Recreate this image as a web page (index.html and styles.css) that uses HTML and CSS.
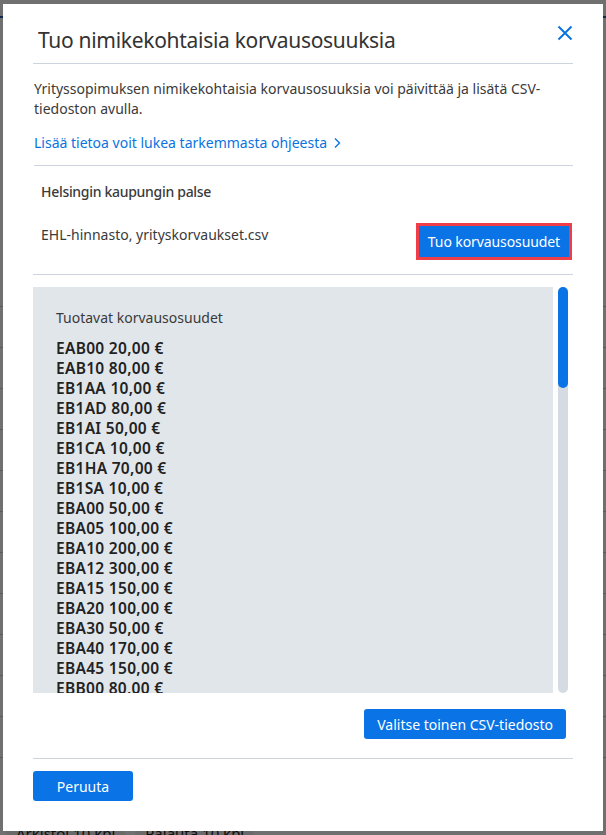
FILE: index.html
```html
<!DOCTYPE html>
<html lang="fi">
  <head>
    <meta charset="UTF-8" />
    <title>Tuo nimikekohtaisia korvausosuuksia</title>
    <link rel="stylesheet" href="styles.css">
  </head>
  <body>
    <!-- page behind the dialog -->
    <div class="page">
      <div class="topbar"></div>
      <div class="rows">
        <div class="row"></div>
        <div class="row"></div>
        <div class="row"></div>
        <div class="row"></div>
        <div class="row"></div>
        <div class="row"></div>
        <div class="row"></div>
        <div class="row"></div>
        <div class="row"></div>
        <div class="row"></div>
        <div class="row"></div>
        <div class="row"></div>
      </div>
      <div class="page-actions">
        <span class="page-btn">Arkistoi 10 kpl</span>
        <span class="page-btn">Palauta 10 kpl</span>
      </div>
    </div>
    <div class="backdrop"></div>

    <div class="modal">
      <div class="modal-header">
        <h2 class="modal-title">Tuo nimikekohtaisia korvausosuuksia</h2>
        <button class="close" aria-label="Sulje">
          <svg width="16" height="16" viewBox="0 0 16 16">
            <path d="M1.5 1.5 L14.5 14.5 M14.5 1.5 L1.5 14.5" stroke="#0a73e0" stroke-width="2" fill="none" />
          </svg>
        </button>
      </div>

      <div class="modal-body">
        <p class="intro">
          Yrityssopimuksen nimikekohtaisia korvausosuuksia voi päivittää ja lisätä CSV-tiedoston avulla.
        </p>
        <a class="help-link" href="#">Lisää tietoa voit lukea tarkemmasta ohjeesta
          <svg width="8" height="12" viewBox="0 0 8 12">
            <path d="M2 1.5 L6.5 6 L2 10.5" stroke="#0a73e0" stroke-width="1.4" fill="none" />
          </svg>
        </a>

        <div class="import-section">
          <div class="company">Helsingin kaupungin palse</div>
          <div class="file-row">
            <span class="file-name">EHL-hinnasto, yrityskorvaukset.csv</span>
            <button class="btn btn-focus">Tuo korvausosuudet</button>
          </div>
        </div>

        <div class="preview">
          <div class="preview-list">
            <div class="preview-title">Tuotavat korvausosuudet</div>
            <ul id="items"></ul>
          </div>
          <div class="scrollbar"><div class="thumb"></div></div>
        </div>

        <div class="choose-row">
          <button class="btn">Valitse toinen CSV-tiedosto</button>
        </div>
      </div>

      <div class="modal-footer">
        <button class="btn btn-wide">Peruuta</button>
      </div>
    </div>

    <script>
      const rates = [
        ["EAB00", "20,00"], ["EAB10", "80,00"], ["EB1AA", "10,00"],
        ["EB1AD", "80,00"], ["EB1AI", "50,00"], ["EB1CA", "10,00"],
        ["EB1HA", "70,00"], ["EB1SA", "10,00"], ["EBA00", "50,00"],
        ["EBA05", "100,00"], ["EBA10", "200,00"], ["EBA12", "300,00"],
        ["EBA15", "150,00"], ["EBA20", "100,00"], ["EBA30", "50,00"],
        ["EBA40", "170,00"], ["EBA45", "150,00"], ["EBB00", "80,00"],
        ["EBB10", "60,00"], ["EBB20", "40,00"]
      ];
      const list = document.getElementById("items");
      rates.forEach(([code, price]) => {
        const li = document.createElement("li");
        li.textContent = `${code} ${price} €`;
        list.appendChild(li);
      });
    </script>
  </body>
</html>
```

FILE: styles.css
```css
* {
  box-sizing: border-box;
}

body {
  margin: 0;
  font-family: "Noto Sans", "Open Sans", sans-serif;
  color: #333;
  background: #fff;
  width: 606px;
  height: 835px;
  overflow: hidden;
}

/* background page */
.page {
  height: 835px;
  display: flex;
  flex-direction: column;
}

.topbar {
  height: 18px;
  border-bottom: 2px solid #1c5fb0;
}

.rows {
  margin-top: 248px;
}

.row {
  height: 41px;
  border-bottom: 1px solid #cfcfcf;
}

.page-actions {
  margin-top: auto;
  display: flex;
  gap: 10px;
  padding: 0 0 0 6px;
  height: 14px;
}

.page-btn {
  font-size: 15px;
  color: #222;
  background: #f2f2f2;
  padding: 0 10px;
  line-height: 24px;
}

.backdrop {
  position: fixed;
  inset: 0;
  background: rgba(0, 0, 0, 0.56);
}

/* dialog */
.modal {
  position: absolute;
  left: 3px;
  top: 4px;
  width: 600px;
  height: 827px;
  background: #fff;
  display: flex;
  flex-direction: column;
  padding: 0 30px;
}

.modal-header {
  height: 60px;
  border-bottom: 1px solid #ccd4dd;
  display: flex;
  align-items: center;
  justify-content: space-between;
  padding: 0 0 0 5px;
}

.modal-title {
  margin: 0;
  font-size: 21px;
  font-weight: 400;
  color: #333;
  letter-spacing: -0.3px;
  padding-top: 12px;
}

.close {
  border: none;
  background: none;
  padding: 0;
  margin: 0 0 1px 0;
  width: 16px;
  height: 16px;
  cursor: pointer;
}

.modal-body {
  flex: 1;
  display: flex;
  flex-direction: column;
}

.intro {
  margin: 15px 0 0 1px;
  font-size: 14px;
  line-height: 20px;
  color: #3a3a3a;
}

.help-link {
  margin: 14px 0 0 1px;
  font-size: 14px;
  line-height: 20px;
  color: #0a73e0;
  text-decoration: none;
  display: flex;
  align-items: center;
  gap: 6px;
  padding-bottom: 12px;
  border-bottom: 1px solid #ccd4dd;
}

.import-section {
  padding: 16px 1px 15px 8px;
  border-bottom: 1px solid #ccd4dd;
}

.company {
  font-size: 14px;
  font-weight: 500;
  line-height: 20px;
  color: #3a3a3a;
  letter-spacing: -0.3px;
}

.file-row {
  margin-top: 23px;
  display: flex;
  justify-content: space-between;
  align-items: flex-start;
}

.file-name {
  font-size: 14px;
  line-height: 20px;
  color: #3a3a3a;
}

.btn {
  font-family: inherit;
  font-size: 14px;
  color: #fff;
  background: #0a73e6;
  border: none;
  border-radius: 3px;
  height: 30px;
  padding: 0 13px;
  cursor: pointer;
}

.btn-focus {
  height: 37px;
  border-radius: 0;
  padding: 0 9px;
  border: 3px solid #ef3e48;
  margin-top: -2px;
  margin-bottom: -1px;
  letter-spacing: -0.1px;
}

.preview {
  margin-top: 12px;
  height: 406px;
  display: flex;
  gap: 5px;
  padding-right: 5px;
}

.preview-list {
  flex: 1;
  background: #e1e6eb;
  padding: 21px 23px;
  overflow: hidden;
}

.preview-title {
  font-size: 14px;
  line-height: 20px;
  color: #3a3a3a;
  margin-bottom: 10px;
}

#items {
  list-style: none;
  margin: 0;
  padding: 0;
}

#items li {
  font-size: 15.5px;
  font-weight: 600;
  line-height: 20px;
  color: #222;
  letter-spacing: 0.3px;
}

.scrollbar {
  width: 10px;
  background: #d4dbe2;
  border-radius: 5px;
}

.thumb {
  height: 101px;
  background: #0a73e6;
  border-radius: 5px;
}

.choose-row {
  display: flex;
  justify-content: flex-end;
  padding: 16px 7px 19px 0;
  border-bottom: 1px solid #ccd4dd;
}

.modal-footer {
  height: 70px;
  padding-top: 10px;
}

.btn-wide {
  width: 100px;
}
```
